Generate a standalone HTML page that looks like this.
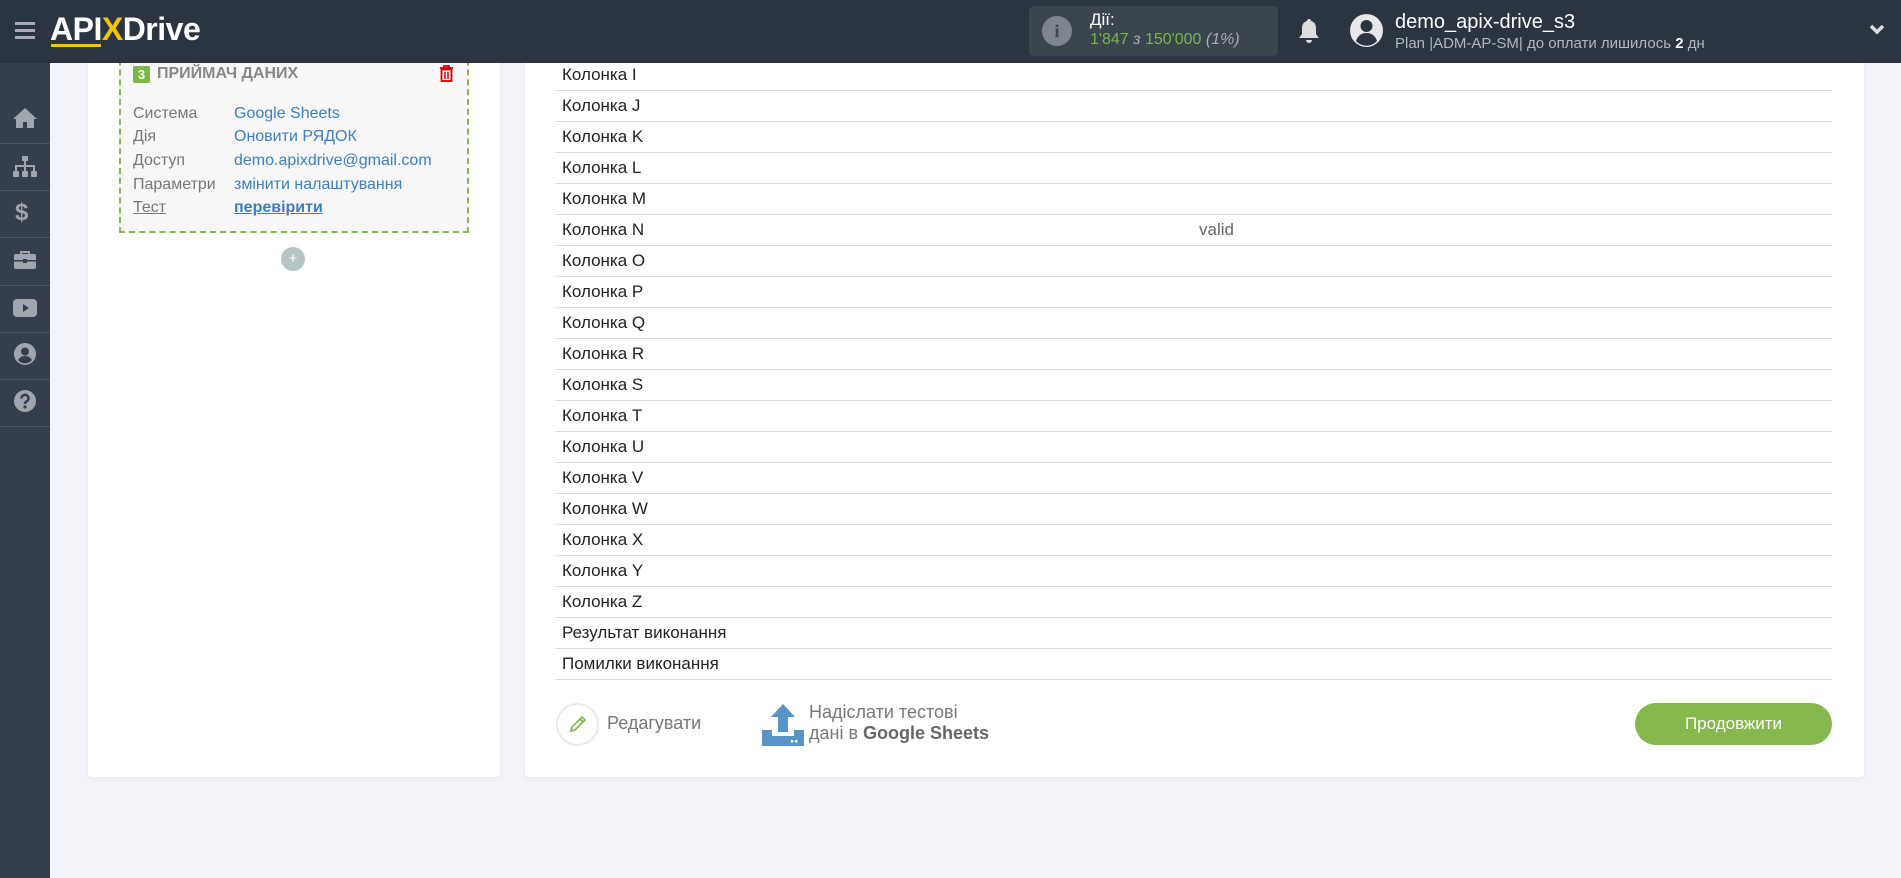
<!DOCTYPE html>
<html><head><meta charset="utf-8"><style>
*{margin:0;padding:0;box-sizing:border-box}
body{width:1901px;height:878px;overflow:hidden;background:#f2f4f9;font-family:"Liberation Sans",sans-serif;position:relative}
.hdr{position:absolute;left:0;top:0;width:1901px;height:63px;background:#2b3441;z-index:10}
.sb{position:absolute;left:0;top:63px;width:50px;height:815px;background:#343e4c}
.sep{position:absolute;left:0;width:50px;height:1px;background:#4a5462}
.ab{position:absolute}
.card{position:absolute;background:#fff;border-radius:4px;box-shadow:0 2px 6px rgba(0,0,0,.05)}
.row{position:absolute;left:555px;width:1277px;height:31px;border-bottom:1px solid #dedede;font-size:17px;color:#222;padding-left:7px;line-height:30px}
.lab{position:absolute;left:133px;font-size:16px;color:#777}
.val{position:absolute;left:234px;font-size:16px;color:#3a7fc1}
.narrow{font-family:"Liberation Sans Narrow","Liberation Sans",sans-serif}
</style></head><body>
<div class="sb"></div>
<div class="sep" style="top:143px"></div><div class="sep" style="top:190px"></div><div class="sep" style="top:237px"></div><div class="sep" style="top:285px"></div><div class="sep" style="top:332px"></div><div class="sep" style="top:379px"></div><div class="sep" style="top:426px"></div>
<svg class="ab" style="left:13px;top:107px" width="24" height="22" viewBox="0 0 24 22"><path d="M12 1L0 12h3v9h7v-6h4v6h7v-9h3z" fill="#a0a6ad"/></svg>
<svg class="ab" style="left:12px;top:156px" width="26" height="22" viewBox="0 0 26 22"><rect x="10" y="0" width="6" height="5" fill="#a0a6ad"/><path d="M13 5v5M4 15v-5h18v5M13 10v5" stroke="#a0a6ad" stroke-width="2" fill="none"/><rect x="1" y="15" width="6" height="6" rx="1" fill="#a0a6ad"/><rect x="10" y="15" width="6" height="6" rx="1" fill="#a0a6ad"/><rect x="19" y="15" width="6" height="6" rx="1" fill="#a0a6ad"/></svg>
<div class="ab" style="left:15px;top:199px;font-size:24px;font-weight:bold;color:#a0a6ad">$</div>
<svg class="ab" style="left:14px;top:250px" width="22" height="20" viewBox="0 0 22 20"><path d="M7 4V2h8v2" stroke="#a0a6ad" stroke-width="2" fill="none"/><rect x="0" y="4" width="22" height="15" rx="2" fill="#a0a6ad"/><rect x="0" y="10" width="22" height="1.5" fill="#343e4c"/><rect x="9" y="9" width="4" height="4" fill="#343e4c"/></svg>
<svg class="ab" style="left:13px;top:299px" width="24" height="18" viewBox="0 0 24 18"><rect width="24" height="18" rx="4" fill="#a0a6ad"/><path d="M10 5v8l6-4z" fill="#343e4c"/></svg>
<svg class="ab" style="left:14px;top:343px" width="22" height="22" viewBox="0 0 22 22"><circle cx="11" cy="11" r="11" fill="#a0a6ad"/><circle cx="11" cy="8.5" r="4" fill="#343e4c"/><path d="M4 17c2-3 4-4 7-4s5 1 7 4a9 9 0 0 1-14 0z" fill="#343e4c"/></svg>
<svg class="ab" style="left:14px;top:390px" width="22" height="22" viewBox="0 0 22 22"><circle cx="11" cy="11" r="11" fill="#a0a6ad"/><path d="M7.5 8.5a3.5 3.5 0 1 1 5 3c-1.3.7-1.5 1.3-1.5 2.5" stroke="#343e4c" stroke-width="2.6" fill="none"/><circle cx="11" cy="17" r="1.6" fill="#343e4c"/></svg>

<div class="card" style="left:88px;top:40px;width:412px;height:737px"></div>
<div class="ab" style="left:119px;top:40px;width:350px;height:193px;background:#f7f7f7;border:2px dashed #86b84e;border-top:none"></div>
<div class="ab" style="left:133px;top:66px;width:17px;height:17px;background:#7ab648;border-radius:2px;color:#fff;font-size:13px;font-weight:bold;text-align:center;line-height:17px">3</div>
<div class="ab" style="left:157px;top:65px;font-size:16px;font-weight:bold;color:#888">ПРИЙМАЧ ДАНИХ</div>
<svg class="ab" style="left:439px;top:65px" width="15" height="17" viewBox="0 0 15 17"><path d="M1 3h13M5 3V1h5v2" stroke="#d40000" stroke-width="1.8" fill="none"/><rect x="2.5" y="4.5" width="10" height="11.5" stroke="#d40000" stroke-width="1.8" fill="none"/><path d="M6 7v7M9 7v7" stroke="#d40000" stroke-width="1.5"/></svg>
<div class="lab" style="top:105px">Система</div><div class="val" style="top:105px">Google Sheets</div>
<div class="lab" style="top:128px">Дія</div><div class="val" style="top:128px">Оновити РЯДОК</div>
<div class="lab" style="top:152px">Доступ</div><div class="val" style="top:152px">demo.apixdrive@gmail.com</div>
<div class="lab" style="top:176px">Параметри</div><div class="val" style="top:176px">змінити налаштування</div>
<div class="lab" style="top:199px;text-decoration:underline">Тест</div><div class="val" style="top:199px;font-weight:bold;text-decoration:underline">перевірити</div>
<div class="ab" style="left:281px;top:247px;width:24px;height:24px;border-radius:50%;background:#b5c4c4;color:#fff;text-align:center;line-height:23px;font-size:15px">+</div>

<div class="card" style="left:525px;top:40px;width:1339px;height:737px"></div>
<div class="row" style="top:60px">Колонка I</div>
<div class="row" style="top:91px">Колонка J</div>
<div class="row" style="top:122px">Колонка K</div>
<div class="row" style="top:153px">Колонка L</div>
<div class="row" style="top:184px">Колонка M</div>
<div class="row" style="top:215px">Колонка N<span style="position:absolute;left:644px;color:#666">valid</span></div>
<div class="row" style="top:246px">Колонка O</div>
<div class="row" style="top:277px">Колонка P</div>
<div class="row" style="top:308px">Колонка Q</div>
<div class="row" style="top:339px">Колонка R</div>
<div class="row" style="top:370px">Колонка S</div>
<div class="row" style="top:401px">Колонка T</div>
<div class="row" style="top:432px">Колонка U</div>
<div class="row" style="top:463px">Колонка V</div>
<div class="row" style="top:494px">Колонка W</div>
<div class="row" style="top:525px">Колонка X</div>
<div class="row" style="top:556px">Колонка Y</div>
<div class="row" style="top:587px">Колонка Z</div>
<div class="row" style="top:618px">Результат виконання</div>
<div class="row" style="top:649px">Помилки виконання</div>

<div class="ab" style="left:556px;top:703px;width:43px;height:43px;border-radius:50%;border:2px solid #e4ece4"></div>
<svg class="ab" style="left:568px;top:714px" width="20" height="20" viewBox="0 0 20 20"><path d="M3 17l1-4 10-10 3 3-10 10zM12 5l3 3" stroke="#7ab648" stroke-width="1.6" fill="none"/></svg>
<div class="ab" style="left:607px;top:713px;font-size:18px;color:#777">Редагувати</div>
<svg class="ab" style="left:762px;top:704px" width="42" height="42" viewBox="0 0 42 42"><path d="M21 0L33 13h-7v15h-10V13H9z" fill="#5a93c6"/><path d="M0 26h10v6h22v-6h10v16H0z" fill="#5a93c6"/><rect x="29" y="36" width="2.5" height="2.5" fill="#fff"/><rect x="33" y="36" width="2.5" height="2.5" fill="#fff"/></svg>
<div class="ab" style="left:809px;top:702px;font-size:18px;color:#777;line-height:21px">Надіслати тестові<br>дані в <b style="color:#666">Google Sheets</b></div>
<div class="ab" style="left:1635px;top:703px;width:197px;height:42px;border-radius:21px;background:#86b84e;color:#fff;font-size:17px;text-align:center;line-height:42px">Продовжити</div>

<div class="hdr">
 <div class="ab" style="left:15px;top:22px;width:20px;height:3px;background:#aab;box-shadow:0 7px 0 #aab,0 14px 0 #aab"></div>
 <div class="ab" style="left:50px;top:11px;font-size:32px;font-weight:bold;color:#fff;letter-spacing:-0.5px">API<span style="color:#f5c400">X</span>Drive</div>
 <div class="ab" style="left:51px;top:44px;width:50px;height:3px;background:#f5c400"></div>
 <div class="ab" style="left:1029px;top:6px;width:249px;height:50px;background:#3a4550;border-radius:5px"></div>
 <div class="ab" style="left:1042px;top:16px;width:30px;height:30px;border-radius:50%;background:#7d8590;color:#3a4550;font-weight:bold;font-size:18px;text-align:center;line-height:30px;font-family:'Liberation Serif',serif">i</div>
 <div class="ab narrow" style="left:1090px;top:10px;font-size:17px;color:#fff">Дії:</div>
 <div class="ab narrow" style="left:1090px;top:31px;font-size:16px;color:#7ab648">1'847 <i style="color:#aab">з</i> 150'000 <i style="color:#aab">(1%)</i></div>
 <svg class="ab" style="left:1297px;top:18px" width="24" height="26" viewBox="0 0 24 26"><path d="M12 1a2 2 0 0 1 2 2c4 1 5 4 5 8v5l3 4H2l3-4v-5c0-4 1-7 5-8a2 2 0 0 1 2-2zM9 22h6a3 3 0 0 1-6 0z" fill="#ddd"/></svg>
 <svg class="ab" style="left:1350px;top:14px" width="33" height="33" viewBox="0 0 33 33"><circle cx="16.5" cy="16.5" r="16.5" fill="#e8e8e8"/><circle cx="16.5" cy="12" r="6" fill="#2b3441"/><path d="M6 27c2-6 6-8 10.5-8s8.5 2 10.5 8a14 14 0 0 1-21 0z" fill="#2b3441"/></svg>
 <div class="ab narrow" style="left:1395px;top:11px;font-size:20px;color:#fff">demo_apix-drive_s3</div>
 <div class="ab narrow" style="left:1395px;top:35px;font-size:15px;color:#b0b8c2">Plan |ADM-AP-SM| до оплати лишилось <b style="color:#fff">2</b> дн</div>
 <svg class="ab" style="left:1869px;top:24px" width="16" height="12" viewBox="0 0 16 12"><path d="M2 2l6 6 6-6" stroke="#ddd" stroke-width="3.5" fill="none"/></svg>
</div>
</body></html>
